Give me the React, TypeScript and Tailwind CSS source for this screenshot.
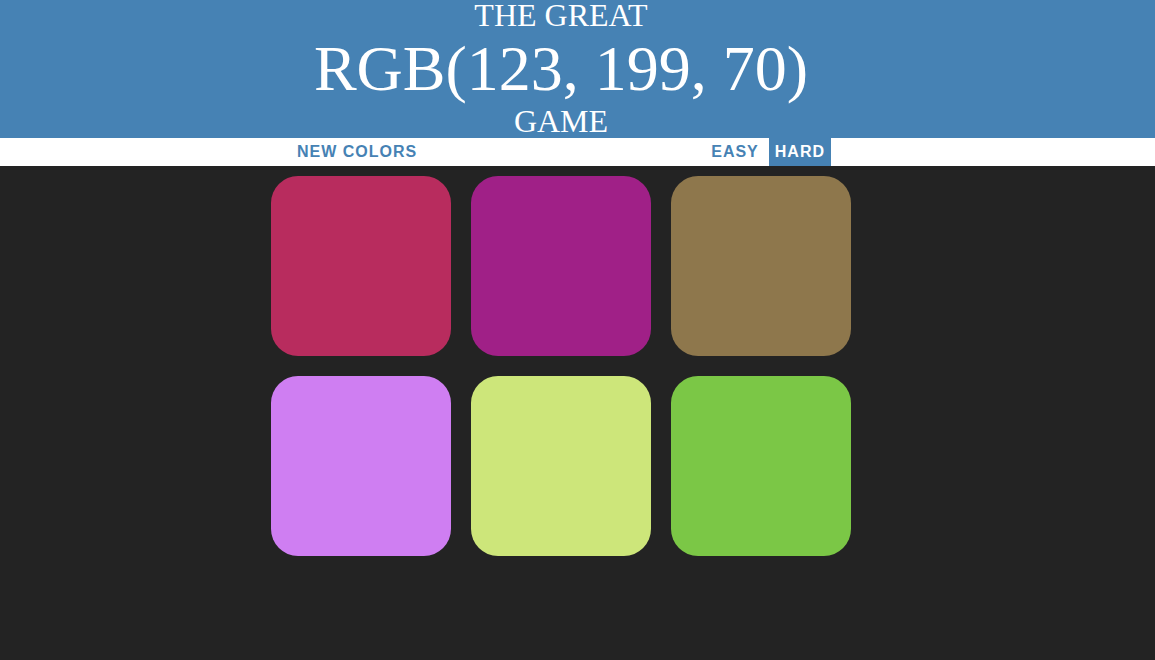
export default function App() {
  const colors = ["#b82c5e", "#a02087", "#8e774c", "#cf7ef2", "#cde67a", "#7bc746"];
  return (
    <div className="min-h-[660px] w-full bg-[#232323]" style={{ fontFamily: '"Liberation Sans", Arial, sans-serif' }}>
      <h1 className="bg-[#4682b4] text-white uppercase font-normal text-center pr-[33px] pb-[3px]" style={{ fontFamily: '"Liberation Serif", "Times New Roman", serif' }}>
        <div className="text-[32px] leading-[31px] h-[31px]">The Great</div>
        <div className="text-[64px] leading-[76px] h-[76px]">RGB(123, 199, 70)</div>
        <div className="text-[32px] leading-[28px] h-[28px]">Game</div>
      </h1>
      <div className="bg-white h-[28px] flex justify-center pr-[33px]">
        <button className="h-full px-[6px] uppercase font-bold text-[16px] tracking-[1px] text-[#4682b4] bg-white whitespace-nowrap shrink-0">New Colors</button>
        <div className="w-[282px] shrink-0" />
        <button className="h-full px-[6px] uppercase font-bold text-[16px] tracking-[1px] text-[#4682b4] bg-white whitespace-nowrap shrink-0">Easy</button>
        <div className="w-[4px] shrink-0" />
        <button className="h-full px-[6px] uppercase font-bold text-[16px] tracking-[1px] text-white bg-[#4682b4] whitespace-nowrap shrink-0">Hard</button>
      </div>
      <div className="flex justify-center pr-[33px] pt-[10px]">
        <div className="grid grid-cols-3 gap-x-[20px] gap-y-[20px] w-[580px]">
          {colors.map((c, i) => (
            <div key={i} className="w-[180px] h-[180px] rounded-[27px]" style={{ backgroundColor: c }} />
          ))}
        </div>
      </div>
    </div>
  );
}
